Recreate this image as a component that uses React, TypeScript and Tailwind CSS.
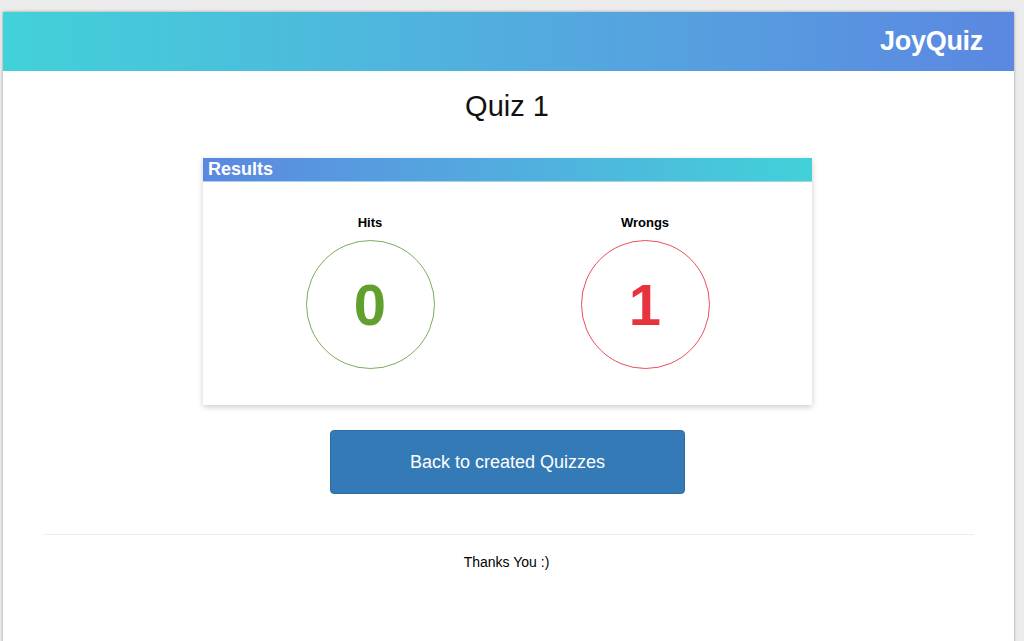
import React from 'react';

// Results page of a finished quiz
const App = () => {
  const results = [
    { label: "Hits", value: 0, ring: "border-[#7aae5c]", text: "text-[#62a02e]" },
    { label: "Wrongs", value: 1, ring: "border-[#ec4f5b]", text: "text-[#e8323e]" },
  ];

  return (
    <div className="min-h-screen bg-[#ececec] pt-3 pl-[3px] pr-[10px] font-['Liberation_Sans',Arial,sans-serif] text-[#111]">
      <div className="min-h-[700px] bg-white shadow-[0_0_3px_rgba(0,0,0,0.35)]">
        {/* Header */}
        <header className="h-[59px] bg-gradient-to-r from-[#41d1d9] to-[#5b87e1] flex items-center justify-end pr-[31px]">
          <span className="text-white font-bold text-[27px] tracking-[-0.3px]">JoyQuiz</span>
        </header>

        <h1 className="text-center text-[29px] mt-[18px] leading-[34px] pr-[3px]">Quiz 1</h1>

        {/* Results card */}
        <div className="w-[609px] ml-[200px] mt-[35px] bg-white shadow-[0_2px_6px_rgba(0,0,0,0.2)] h-[247px]">
          <div className="h-[24px] bg-gradient-to-r from-[#5b87e1] to-[#41d1d9] flex items-center pl-[5px] border-b border-[#9fd6e6]">
            <span className="text-white font-bold text-[18px]">Results</span>
          </div>
          <div className="flex justify-center pt-[32px]">
            {results.map(r => (
              <div key={r.label} className="w-[275px] flex flex-col items-center">
                <p className="font-bold text-[13px] text-black leading-[18px]">{r.label}</p>
                <div className={`mt-[8px] w-[129px] h-[129px] rounded-full border ${r.ring} flex items-center justify-center`}>
                  <span className={`font-bold text-[58px] leading-none ${r.text}`}>{r.value}</span>
                </div>
              </div>
            ))}
          </div>
        </div>

        {/* Back button */}
        <div className="flex justify-center mt-[25px] pr-[2px]">
          <button className="w-[355px] h-[64px] bg-[#337ab7] border border-[#2e6da4] rounded-[4px] text-white text-[18px]">
            Back to created Quizzes
          </button>
        </div>

        <hr className="mx-[40px] mt-[40px] border-t border-[#eeeeee]" />
        <p className="text-center text-[14px] mt-[17px] pr-[4px] text-black">Thanks You :)</p>
      </div>
    </div>
  );
};

export default App;
